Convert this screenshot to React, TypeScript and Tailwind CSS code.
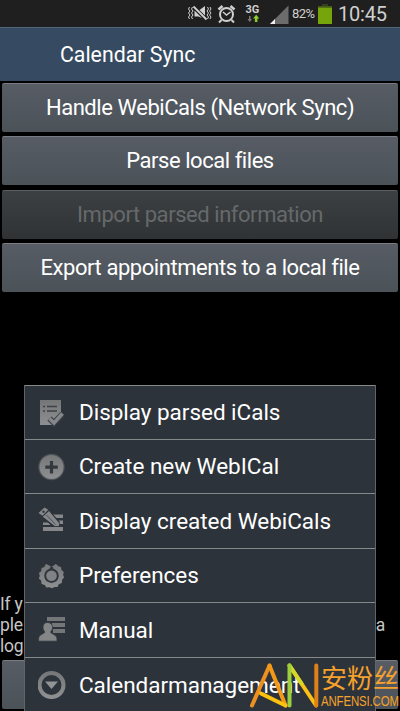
import clsx from 'clsx';
import type { FC, ReactNode } from 'react';

interface ButtonProps {
    label: string;
    disabled?: boolean;
}

const BarButton: FC<ButtonProps> = ({ label, disabled }) => (
    <button
        disabled={disabled}
        className={clsx(
            'block h-[49px] w-full shrink-0 rounded-[2px] border-t text-center text-[22px] leading-[48px] tracking-[-0.45px] whitespace-nowrap',
            disabled
                ? 'border-[#5c5f61] bg-linear-to-b from-[#3d4043] to-[#303335] text-[#66696b]'
                : 'border-[#797d82] bg-linear-to-b from-[#575c65] to-[#4b5258] text-white',
        )}
    >
        {label}
    </button>
);

const Icon: FC<{ children: ReactNode }> = ({ children }) => (
    <svg width="28" height="28" viewBox="0 0 28 28" className="shrink-0">
        <defs>
            <linearGradient id="metal" x1="0" y1="0" x2="0" y2="28" gradientUnits="userSpaceOnUse">
                <stop offset="0" stopColor="#737577" />
                <stop offset="1" stopColor="#909192" />
            </linearGradient>
        </defs>
        {children}
    </svg>
);

const ParsedIcon = () => (
    <Icon>
        <path d="M2 1h21v17l-6 8H2z" fill="url(#metal)" />
        <path d="M5 7.500h2M9 7.500h10M5 12h2M9 12h10" stroke="#3b4147" strokeWidth="1.5" />
        <path d="m11.500 19.500 4.500 4.500 8.500-9" fill="none" stroke="#3b4046" strokeWidth="6" />
        <path d="m11.500 19.500 4.500 4.500 8.500-9.500" fill="none" stroke="#85878a" strokeWidth="3.600" />
    </Icon>
);

const AddIcon = () => (
    <Icon>
        <circle cx="13.500" cy="14" r="13.200" fill="#505459" />
        <circle cx="13.500" cy="14" r="12" fill="url(#metal)" />
        <path d="M13.500 8v12.500M7.300 14.200h12.500" stroke="#33393f" strokeWidth="3.200" />
    </Icon>
);

const CreatedIcon = () => (
    <Icon>
        <path d="M13 7.500h12v3.500H15zM16 13.500h9V17h-7zM5 20h20v4H5zM5 15.500h5l2.500 2.500H5z" fill="#85878a" />
        <path d="M0 5.500 6 0l5 2.500 10.500 12 .5 5.500-6-.5L5 11z" fill="#2d333a" />
        <path d="M.5 6 6.500.5l3.800 2.300-5.800 6z" fill="#85878a" />
        <path d="m4.800 9.800 6.200-5.800 10 12v3l-4 .3z" fill="#85878a" />
        <path d="m8.500 8 9 9.500" stroke="#4d5257" strokeWidth="1" />
        <circle cx="5.500" cy="4.800" r="1.200" fill="#34393f" />
    </Icon>
);

const PreferencesIcon = () => (
    <Icon>
        <path
            d="M8.500 2 7 3l-.5 2-3 1-.2 3-2.300 2 .8 3-1 2.500 2.300 2 .5 3.500 3.200 1 1.500 2.500 3.200-.3 2.500 1 2.500-1.200h3l1.300-2.800 3-1.200.3-3.200 2-2.300-1-2.700.7-2.800-2.300-2-.5-3-2.700-.8L19 2.800 17.500 2l-2.500 2h-3z"
            fill="url(#metal)"
        />
        <path d="M13.500 3 15.500 6.800a7.200 7.200 0 1 1-4 0z" fill="#30363c" />
        <circle cx="13.500" cy="13.700" r="5.300" fill="#808285" />
    </Icon>
);

const ManualIcon = () => (
    <Icon>
        <path d="M9 1h18v4H9zM14 7h13v4H14zM15 13h12v4H15z" fill="#74777a" />
        <path
            d="M9.500 6.500c3.200 0 5 2 5 4.800 0 2.200-.8 3.600-2 4.700.5 2 6.500 2.400 6.500 7.200v2H.5v-2c0-4.800 5.500-5.200 6.500-7.200-1.200-1.100-2-2.500-2-4.700 0-2.800 1.500-4.800 4.500-4.800z"
            fill="#838587"
            stroke="#31373d"
            strokeWidth=".8"
        />
    </Icon>
);

const ManagementIcon = () => (
    <Icon>
        <circle cx="13.500" cy="14" r="12" fill="none" stroke="url(#metal)" strokeWidth="4" />
        <path d="M7 10.500h13L13.500 18z" fill="#929395" />
    </Icon>
);

const menuItems = [
    { label: 'Display parsed iCals', icon: <ParsedIcon />, height: 'h-[54px]' },
    { label: 'Create new WebICal', icon: <AddIcon />, height: 'h-[54px]' },
    { label: 'Display created WebiCals', icon: <CreatedIcon />, height: 'h-[55px]' },
    { label: 'Preferences', icon: <PreferencesIcon />, height: 'h-[54px]' },
    { label: 'Manual', icon: <ManualIcon />, height: 'h-[55px]' },
    { label: 'Calendarmanagement', icon: <ManagementIcon />, height: 'h-[55px]' },
];

const StatusBar = () => (
    <div className="flex h-7 shrink-0 items-center border-b border-[#52677a] bg-[#1f1f1f] pl-[188px] text-[#cfcfcf]">
        <svg width="101" height="28" viewBox="188 0 101 28" className="shrink-0">
            <g fill="none" stroke="#cfcfcf">
                <path
                    d="m189.500 7-1 2 1.500 2-1.500 2 1.500 2-1.500 2 1 2M192.500 7l-1 2 1.500 2-1.500 2 1.500 2-1.500 2 1 2M207.500 7l1 2-1.500 2 1.500 2-1.500 2 1.500 2-1 2M210 7l1 2-1.500 2 1.500 2-1.500 2 1.500 2-1 2"
                    strokeWidth="1"
                />
                <path d="m193.500 6.500 13 13" strokeWidth="1.800" />
                <circle cx="226.500" cy="14.500" r="6.500" strokeWidth="2" />
                <path d="m223 12 3.500 3 4-3" strokeWidth="1.500" />
                <path d="m218.500 9.500 4-3.500M234.500 9.500l-4-3.500" strokeWidth="2.500" />
                <path d="m221.500 20-2.500 2.500M231.500 20l2.500 2.500" strokeWidth="2" />
            </g>
            <path d="m199.500 10 5.500-4v9.500zM194.500 10.500l7.500 7.500-3.500-1.500h-4z" fill="#cfcfcf" />
            <path d="M249 16h1.500v3h1.500l-2.300 3-2.200-3h1.500z" fill="#77797b" />
            <path d="M254.900 22v-3.500h-1.900l3.200-3.800 3.100 3.800h-1.900V22z" fill="#8ed02b" />
            <path d="M288.500 5.500V24H270z" fill="#6c6c6c" />
            <path d="M275 19v5h-5z" fill="#eee" />
            <text x="245.500" y="13" fontSize="11" fontWeight="700" fill="#cfcfcf">
                3G
            </text>
        </svg>
        <span className="ml-[3px] w-[26px] text-[13px] leading-7 tracking-[-0.5px]">82%</span>
        <svg width="14" height="20" viewBox="0 0 14 20" className="mt-px shrink-0">
            <path d="M4 0h6v2H4z" fill="#34421e" />
            <path d="M0 2h14v1.500H0z" fill="#42591b" />
            <path d="M0 3.500h14V20H0z" fill="#75a50b" />
        </svg>
        <span className="ml-[6px] text-[20px] leading-7 tracking-[-0.2px]">10:45</span>
    </div>
);

const Watermark = () => (
    <div className="absolute top-[658px] left-[250px] h-[53px] w-[150px] text-[#f5a12c]">
        <svg
            width="72"
            height="53"
            viewBox="0 0 72 53"
            className="absolute top-0 left-0"
            fill="none"
            strokeLinecap="round"
        >
            <path d="M2 47.500 19.500 7.500" stroke="#ed9021" strokeWidth="4" />
            <path d="m19.500 7.500 16 40" stroke="#f39918" strokeWidth="4" />
            <path d="m11 35.500 24.500 12" stroke="#ffc20e" strokeWidth="4" />
            <path d="m39.500 7.500 26.500 40" stroke="#f9c016" strokeWidth="4" />
            <path d="m39.500 7.500 12 18" stroke="#d5d829" strokeWidth="4" />
            <path d="M39.500 7.500v40" stroke="#9bcf3c" strokeWidth="4" />
            <path d="M66.300 7.500v40" stroke="#df8019" strokeWidth="4" />
        </svg>
        <span className="absolute top-[5px] left-[71px] font-['Noto_Sans_CJK_SC',sans-serif] text-[26px] leading-[28px] font-normal whitespace-nowrap">
            安粉丝
        </span>
        <span className="absolute top-[36px] left-[71px] origin-left scale-x-[0.79] font-['Liberation_Sans',sans-serif] text-[14.5px] leading-[14px] tracking-[-0.2px] whitespace-nowrap">
            ANFENSI.COM
        </span>
    </div>
);

const App = () => (
    <div className="relative flex h-[711px] w-[400px] flex-col overflow-hidden bg-black font-[Roboto,sans-serif]">
        <StatusBar />
        <header className="flex h-[53px] shrink-0 items-center bg-[#364b62] pl-[60px] text-[21.3px] text-white">
            <h1>Calendar Sync</h1>
        </header>
        <main className="flex flex-1 flex-col px-[2px] pt-[2px]">
            <div className="flex h-[209px] shrink-0 flex-col justify-between">
                <BarButton label="Handle WebiCals (Network Sync)" />
                <BarButton label="Parse local files" />
                <BarButton label="Import parsed information" disabled />
                <BarButton label="Export appointments to a local file" />
            </div>
            <div className="mt-[302px] flex h-[66px] shrink-0 justify-between text-[17.5px] leading-[21px] tracking-[-0.2px] text-[#c6c6c6]">
                <p className="-ml-[2px]">
                    If y
                    <br />
                    ple
                    <br />
                    log
                </p>
                <p className="pt-[21px] pr-[13px]">a</p>
            </div>
            <BarButton label="" />
        </main>

        <ul className="absolute top-[385px] left-6 w-[352px] border-x border-[#5f6569] bg-[#2d333a] text-[22.5px] tracking-[-0.03px] text-white">
            {menuItems.map((item) => (
                <li
                    key={item.label}
                    className={clsx('flex items-center gap-[13px] border-t border-[#85898a] pl-[13px]', item.height)}
                >
                    {item.icon}
                    <span className="pt-px whitespace-nowrap">{item.label}</span>
                </li>
            ))}
        </ul>
        <Watermark />
    </div>
);

export default App;
